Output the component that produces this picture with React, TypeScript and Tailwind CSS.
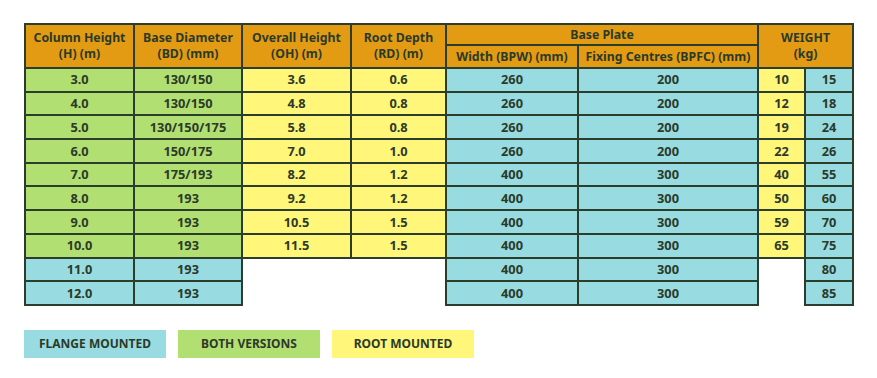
const G = "bg-[#b2df72]";
const Y = "bg-[#fff67a]";
const C = "bg-[#98dce2]";

type Row = {
  h: string;
  bd: string;
  oh?: string;
  rd?: string;
  bpw: string;
  bpfc: string;
  w1?: string;
  w2: string;
};

const rows: Row[] = [
  { h: "3.0", bd: "130/150", oh: "3.6", rd: "0.6", bpw: "260", bpfc: "200", w1: "10", w2: "15" },
  { h: "4.0", bd: "130/150", oh: "4.8", rd: "0.8", bpw: "260", bpfc: "200", w1: "12", w2: "18" },
  { h: "5.0", bd: "130/150/175", oh: "5.8", rd: "0.8", bpw: "260", bpfc: "200", w1: "19", w2: "24" },
  { h: "6.0", bd: "150/175", oh: "7.0", rd: "1.0", bpw: "260", bpfc: "200", w1: "22", w2: "26" },
  { h: "7.0", bd: "175/193", oh: "8.2", rd: "1.2", bpw: "400", bpfc: "300", w1: "40", w2: "55" },
  { h: "8.0", bd: "193", oh: "9.2", rd: "1.2", bpw: "400", bpfc: "300", w1: "50", w2: "60" },
  { h: "9.0", bd: "193", oh: "10.5", rd: "1.5", bpw: "400", bpfc: "300", w1: "59", w2: "70" },
  { h: "10.0", bd: "193", oh: "11.5", rd: "1.5", bpw: "400", bpfc: "300", w1: "65", w2: "75" },
  { h: "11.0", bd: "193", bpw: "400", bpfc: "300", w2: "80" },
  { h: "12.0", bd: "193", bpw: "400", bpfc: "300", w2: "85" },
];

const th = "border-2 border-[#2b3d2b] bg-[#e39b14] px-1 text-center align-middle leading-[16px] text-[12.3px]";
const td = "border-2 border-[#2b3d2b] h-[23.7px] p-0 text-center align-middle leading-none";

export default function App() {
  return (
    <div
      className="bg-white w-[877px] h-[378px] pl-[24px] pt-[23px] text-[#2b3a29] font-bold"
      style={{ fontFamily: '"Noto Sans", sans-serif' }}
    >
      <table className="table-fixed border-collapse w-[828px] text-[12.8px]">
        <colgroup>
          <col className="w-[109px]" />
          <col className="w-[108px]" />
          <col className="w-[109px]" />
          <col className="w-[95px]" />
          <col className="w-[132px]" />
          <col className="w-[180px]" />
          <col className="w-[47px]" />
          <col className="w-[48px]" />
        </colgroup>
        <thead>
          <tr className="h-[21px]">
            <th rowSpan={2} className={th}>Column Height<br />(H) (m)</th>
            <th rowSpan={2} className={th}>Base Diameter<br />(BD) (mm)</th>
            <th rowSpan={2} className={th}>Overall Height<br />(OH) (m)</th>
            <th rowSpan={2} className={th}>Root Depth<br />(RD) (m)</th>
            <th colSpan={2} className={th}>Base Plate</th>
            <th rowSpan={2} colSpan={2} className={th}>WEIGHT<br />(kg)</th>
          </tr>
          <tr className="h-[23px]">
            <th className={th}>Width (BPW) (mm)</th>
            <th className={th}>Fixing Centres (BPFC) (mm)</th>
          </tr>
        </thead>
        <tbody>
          {rows.map((r) => {
            const both = r.oh !== undefined;
            return (
              <tr key={r.h}>
                <td className={`${td} ${both ? G : C}`}>{r.h}</td>
                <td className={`${td} ${both ? G : C}`}>{r.bd}</td>
                {both ? (
                  <>
                    <td className={`${td} ${Y}`}>{r.oh}</td>
                    <td className={`${td} ${Y}`}>{r.rd}</td>
                  </>
                ) : (
                  <>
                    <td className="p-0 border-0" />
                    <td className="p-0 border-0" />
                  </>
                )}
                <td className={`${td} ${C}`}>{r.bpw}</td>
                <td className={`${td} ${C}`}>{r.bpfc}</td>
                {r.w1 ? (
                  <td className={`${td} ${Y}`}>{r.w1}</td>
                ) : (
                  <td className="p-0 border-0" />
                )}
                <td className={`${td} ${C}`}>{r.w2}</td>
              </tr>
            );
          })}
        </tbody>
      </table>

      <div className="flex gap-[12px] mt-[24px] text-[12px] uppercase">
        <div className={`${C} w-[142px] h-[28px] flex items-center justify-center`}>Flange Mounted</div>
        <div className={`${G} w-[142px] h-[28px] flex items-center justify-center`}>Both Versions</div>
        <div className={`${Y} w-[142px] h-[28px] flex items-center justify-center`}>Root Mounted</div>
      </div>
    </div>
  );
}
